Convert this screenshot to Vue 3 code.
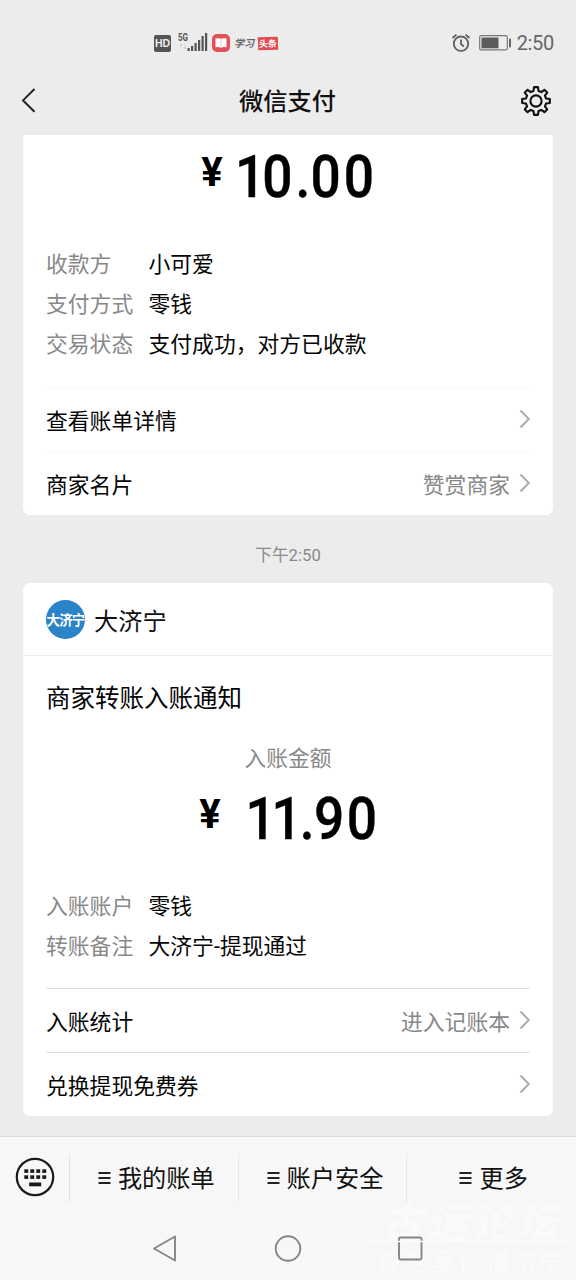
<script setup>
const paid = [
  ['收款方', '小可爱'],
  ['支付方式', '零钱'],
  ['交易状态', '支付成功，对方已收款']
]
const received = [
  ['入账账户', '零钱'],
  ['转账备注', '大济宁-提现通过']
]
const menus = ['我的账单', '账户安全', '更多']
const signal = [3, 5, 8, 11, 15, 18]
const teeth = Array.from({ length: 8 }, (_, i) => i * 45)
const gear = (() => {
  const pts = []
  for (const a of teeth) {
    for (const [d, r] of [[-14, 10.4], [-8, 14], [8, 14], [14, 10.4]]) {
      const t = ((a + d) * Math.PI) / 180
      pts.push((16 + r * Math.sin(t)).toFixed(2) + ' ' + (16 - r * Math.cos(t)).toFixed(2))
    }
  }
  return 'M' + pts.join('L') + 'Z'
})()
</script>

<template>
  <div class="phone">
    <div class="status">
      <div class="left">
        <span class="hd">HD</span>
        <svg class="sig" width="32" height="22" viewBox="0 0 32 22">
          <text x="0" y="8.5" class="five" textLength="10" lengthAdjust="spacingAndGlyphs">5G</text>
          <text x="1" y="17" class="arr" textLength="8" lengthAdjust="spacingAndGlyphs">↑↓</text>
          <rect v-for="(h, i) in signal" :key="i" :x="9.5 + i * 3.5" :y="19 - h" width="2.2" :height="h" fill="#555" />
        </svg>
        <svg class="book" width="18" height="18" viewBox="0 0 18 18">
          <rect width="18" height="18" rx="5" fill="#e2505b" />
          <path d="M3.500 4.500Q6.500 3.800 9 4.800Q11.500 3.800 14.500 4.500V13.300Q11.500 12.500 9 13.800Q6.500 12.500 3.500 13.300Z" fill="#fff" />
          <path d="M9 4.800V13.500" stroke="#f3b4b8" stroke-width=".7" />
        </svg>
        <span class="xue">学习</span>
        <span class="tou">头条</span>
      </div>
      <div class="right">
        <svg width="20" height="20" viewBox="0 0 20 20" fill="none" stroke="#606060" stroke-width="1.8">
          <circle cx="10" cy="10.700" r="7.200" />
          <path d="M10 6.500V11L12.800 13.500M1.500 5L5.500 1.600M18.500 5L14.500 1.600" />
        </svg>
        <svg class="bat" width="33" height="16" viewBox="0 0 33 16">
          <rect x=".7" y=".7" width="27.600" height="14.200" rx="1.500" fill="none" stroke="#777" stroke-width="1.2" />
          <rect x="2.500" y="2.500" width="17" height="10.800" fill="#5c5c5c" />
          <rect x="30" y="3.500" width="2" height="9" rx=".8" fill="#666" />
        </svg>
        <span class="clock">2:50</span>
      </div>
    </div>

    <header class="nav">
      <svg width="32" height="26" viewBox="0 0 32 26"><path d="M14.500 1L3 12.400L14.500 23.800" fill="none" stroke="#222" stroke-width="2" /></svg>
      <h1>微信支付</h1>
      <svg width="32" height="32" viewBox="0 0 32 32" fill="none" stroke="#111" stroke-width="2.1" stroke-linejoin="round">
        <path :d="gear" /><circle cx="16" cy="16" r="5.600" />
      </svg>
    </header>

    <section class="card first">
      <svg class="amount" width="530" height="84" viewBox="0 0 530 84">
        <text class="yen" x="178.200" y="50.500">¥</text>
        <text class="num" transform="scale(.91 1)" x="233 262.800 299.500 315.800 352.600" y="62.500">10.00</text>
      </svg>
      <div class="fields">
        <p v-for="f in paid" :key="f[0]"><span>{{ f[0] }}</span>{{ f[1] }}</p>
      </div>
      <div class="links faint">
        <div class="link"><b>查看账单详情</b><svg class="chev" width="12" height="20" viewBox="0 0 12 20"><path d="M1.500 1.500L9.800 10L1.500 18.500" /></svg></div>
        <div class="link"><b>商家名片</b><i>赞赏商家</i><svg class="chev" width="12" height="20" viewBox="0 0 12 20"><path d="M1.500 1.500L9.800 10L1.500 18.500" /></svg></div>
      </div>
    </section>

    <div class="time">下午2:50</div>

    <section class="card second">
      <div class="merchant"><span class="avatar"><span>大济宁</span></span>大济宁</div>
      <h2>商家转账入账通知</h2>
      <div class="caption">入账金额</div>
      <svg class="amount" width="530" height="84" viewBox="0 0 530 84">
        <text class="yen" x="176.200" y="50.500">¥</text>
        <text class="num" transform="scale(.91 1)" x="244.500 273 304 319.800 355.800" y="62.500">11.90</text>
      </svg>
      <div class="fields">
        <p v-for="f in received" :key="f[0]"><span>{{ f[0] }}</span>{{ f[1] }}</p>
      </div>
      <div class="links">
        <div class="link"><b>入账统计</b><i>进入记账本</i><svg class="chev" width="12" height="20" viewBox="0 0 12 20"><path d="M1.500 1.500L9.800 10L1.500 18.500" /></svg></div>
        <div class="link"><b>兑换提现免费券</b><svg class="chev" width="12" height="20" viewBox="0 0 12 20"><path d="M1.500 1.500L9.800 10L1.500 18.500" /></svg></div>
      </div>
    </section>

    <footer>
      <div class="menu">
        <div class="key">
          <svg width="40" height="40" viewBox="0 0 40 40">
            <circle cx="20" cy="20" r="18.200" fill="none" stroke="#1a1a1a" stroke-width="2.200" />
            <g fill="#1a1a1a">
              <template v-for="r in 2" :key="r">
                <rect v-for="c in 4" :key="c" :x="3.300 + c * 6" :y="6.300 + r * 6" width="3.900" height="3.600" />
              </template>
              <rect x="14.200" y="25.500" width="12" height="3.800" />
            </g>
          </svg>
        </div>
        <div v-for="m in menus" :key="m" class="item">
          <svg width="13" height="14" viewBox="0 0 13 14"><path d="M.5 2H12.500M.5 7H12.500M.5 12H12.500" stroke="#222" stroke-width="2" /></svg><span>{{ m }}</span>
        </div>
      </div>
      <div class="mark"><div class="mark-top">古运论坛</div><div class="mark-low">在这里读懂济宁</div></div>
      <div class="system">
        <svg width="576" height="58" viewBox="0 0 576 58" fill="none" stroke="#858585" stroke-width="1.900" stroke-linejoin="round">
          <path d="M154 27.500L175 15.500V39.500Z" />
          <circle cx="288" cy="27.500" r="12.300" />
          <rect x="399" y="16.500" width="22.500" height="22" rx="1.500" />
          <path d="M371 20.500H571" stroke="#fff" stroke-width="1.500" />
        </svg>
      </div>
    </footer>
  </div>
</template>

<style>
body { margin: 0; background: #ececec; }
</style>
<style scoped>
* { box-sizing: border-box; }
.phone { width: 576px; height: 1280px; overflow: hidden; background: #ececec; display: flex; flex-direction: column; font-family: Roboto, "Noto Sans CJK SC", sans-serif; color: #111; }
.status { height: 67px; padding: 18px 22px 0 154px; display: flex; justify-content: space-between; align-items: flex-start; flex: none; }
.left, .right { display: flex; align-items: center; height: 50px; }
.hd { width: 17px; height: 17px; background: #555; color: #eee; border-radius: 2px; font: bold 10.5px/17px "Liberation Sans", sans-serif; text-align: center; }
.sig { margin-left: 7px; }
.five { font: bold 10.500px Roboto, sans-serif; fill: #555; }
.arr { font: 7px "DejaVu Sans", sans-serif; fill: #bbb; }
.book { margin-left: 2px; }
.xue { margin-left: 4px; width: 20px; font: italic 700 10px/18px "Noto Sans CJK SC", sans-serif; color: #666; white-space: nowrap; }
.tou { margin-left: 4px; width: 20px; height: 13px; background: #e34b50; color: #fff; font: bold 9px/13px "Noto Sans CJK SC", sans-serif; text-align: center; transform: rotate(-2deg); }
.right { color: #666; }
.bat { margin-left: 8px; }
.clock { font-size: 20px; margin-left: 5px; line-height: 50px; letter-spacing: -.3px; }
.nav { height: 68px; flex: none; padding: 0 24px 0 20px; display: flex; align-items: center; justify-content: space-between; }
h1 { margin: 0; padding: 2px 0 0 3px; font-size: 24.200px; font-weight: 500; line-height: 36px; }
.card { width: 530px; margin-left: 23px; background: #fff; flex: none; }
.first { height: 380px; border-radius: 0 0 7px 7px; }
.second { height: 533px; border-radius: 7px; }
.amount { display: block; }
.num { font: 500 58.500px Roboto, sans-serif; fill: #000; stroke: #000; stroke-width: .4px; }
.yen { font: 700 40px Roboto, sans-serif; fill: #000; }
.fields { padding: 26px 23px 0; font-size: 21.800px; line-height: 40px; }
.second .fields { line-height: 41px; }
.fields p { margin: 0; display: flex; height: 40px; color: #050505; }
.fields span { width: 102.500px; color: #888; }
.links { margin: 22px 23px 0; }
.link { height: 64px; border-top: 1px solid #dedede; display: flex; align-items: center; font-size: 21.800px; padding-bottom: 1px; }
.faint .link { border-color: #f7f7f7; }
.link b { font-weight: 400; flex: 1; color: #050505; }
.link i { font-style: normal; color: #888; margin-right: 9px; }
.chev { fill: none; stroke: #aaa; stroke-width: 1.900; margin-right: -1px; }
.time { height: 68px; flex: none; padding-top: 15px; text-align: center; font-size: 16.700px; line-height: 52px; color: #898989; }
.merchant { height: 73px; border-bottom: 1px solid #eee; padding-left: 23px; display: flex; align-items: center; font-size: 24.200px; }
.avatar { width: 39px; height: 39px; margin-right: 9px; border-radius: 50%; background: #2b83c8; color: #fff; display: flex; align-items: center; justify-content: center; overflow: hidden; font: bold 13.500px "Noto Sans CJK SC", sans-serif; letter-spacing: -.8px; }
.avatar span { white-space: nowrap; }
h2 { margin: 0; padding: 23px 23px 0; height: 83px; font-size: 24.500px; line-height: 40px; font-weight: 400; color: #050505; }
.caption { height: 38px; text-align: center; font-size: 21.700px; line-height: 40px; color: #888; }
.second .fields { padding-top: 25px; }
footer { margin-top: 20px; flex: 1; background: #f7f7f7; border-top: 1px solid #dcdcdc; position: relative; }
.menu { height: 84px; display: flex; align-items: center; padding-bottom: 3px; }
.key { width: 70px; height: 48px; padding: 3px 0 0 15px; border-right: 1px solid #e2e2e2; }
.item { width: 169px; height: 48px; display: flex; align-items: center; justify-content: center; gap: 7px; font-size: 24.200px; border-right: 1px solid #e8e8e8; padding-left: 5px; }
.item span { line-height: 28px; padding-top: 3px; }
.item:last-child { border: 0; padding-left: 4px; }
.system { height: 58px; position: relative; }
.system svg { display: block; }
.mark { position: absolute; left: 371px; top: 60px; width: 202px; color: #fafafa; text-align: center; white-space: nowrap; }
.mark-top { height: 46px; font: italic 900 40px/46px "Noto Sans CJK SC", sans-serif; letter-spacing: 5px; }
.mark-low { height: 36px; font: bold 24px/36px "Noto Sans CJK SC", sans-serif; letter-spacing: 3px; }
</style>
